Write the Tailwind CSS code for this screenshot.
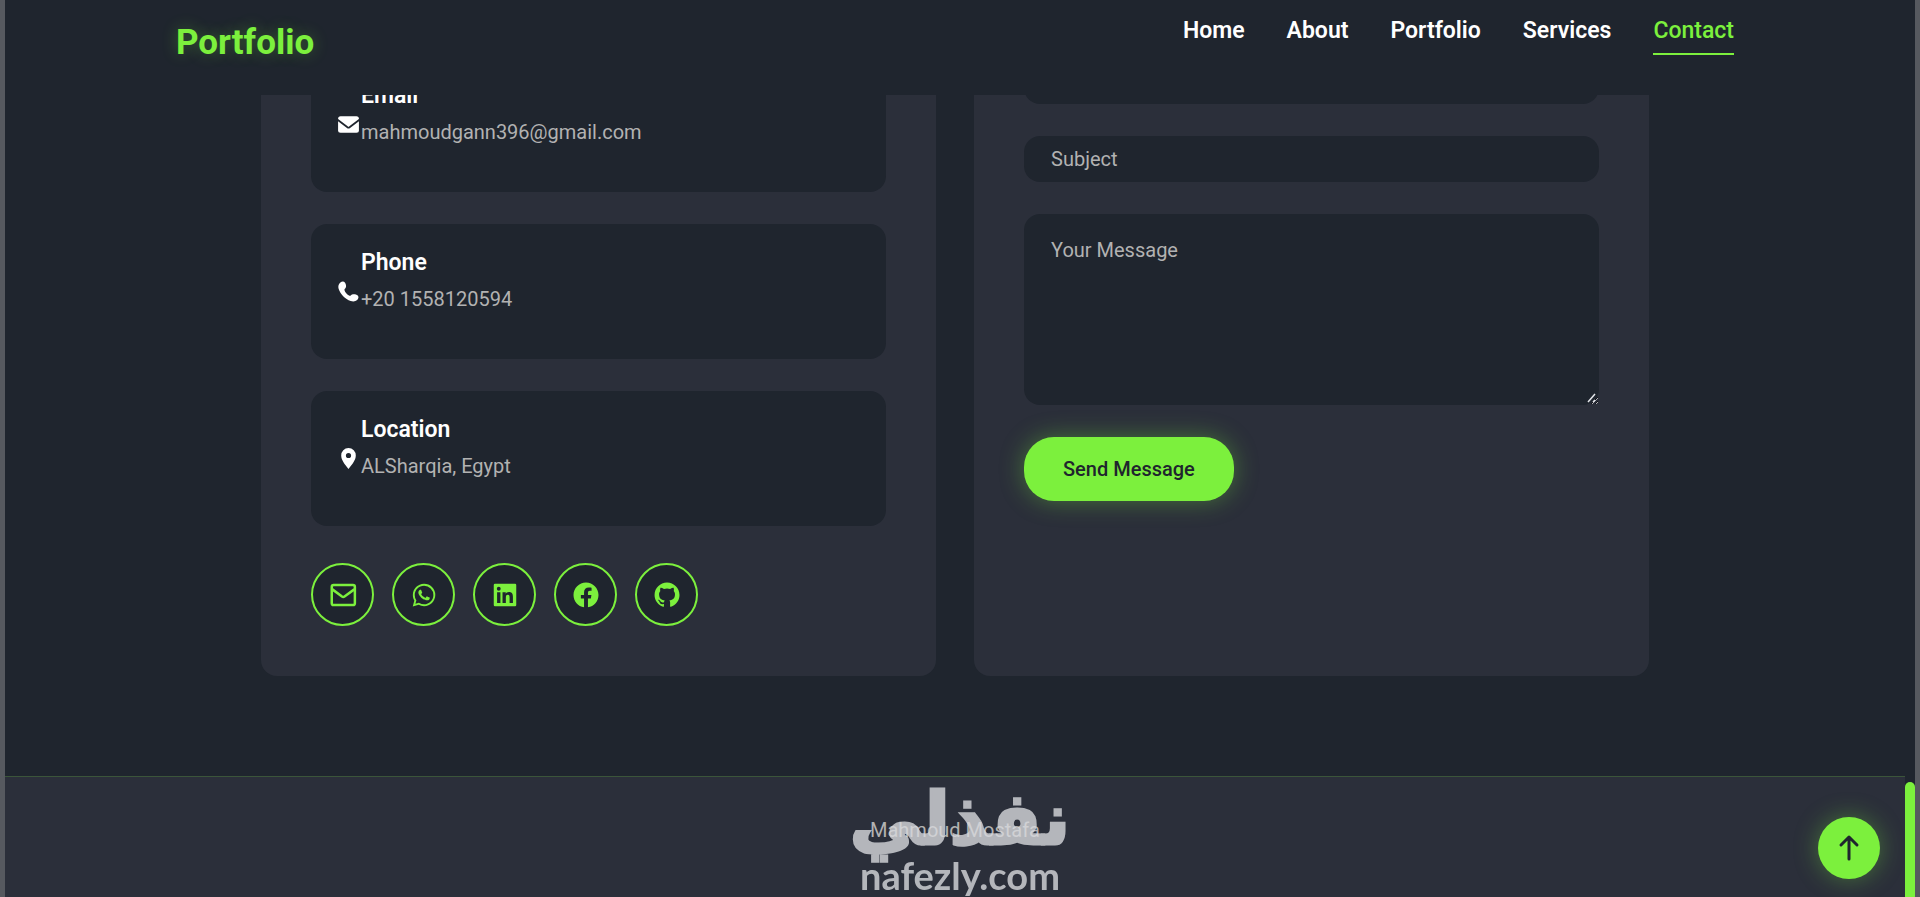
<!DOCTYPE html>
<html lang="en">
<head>
<meta charset="utf-8">
<title>Portfolio</title>
<script src="https://cdn.jsdelivr.net/npm/@tailwindcss/browser@4"></script>
</head>
<body class="h-screen overflow-hidden border-x-[5px] border-[#56595f] bg-[#1f252e] font-[Roboto,sans-serif] text-white">
<div class="flex h-full">
  <div class="relative flex min-w-0 flex-1 flex-col">
    <header class="absolute inset-x-0 top-0 z-10 flex h-[95px] items-start justify-between bg-[#1f252e] px-[9%]">
      <a href="#" class="mt-[22px] text-[35px] leading-[42px] font-bold text-[#7cf03d] [text-shadow:0_0_16px_rgba(124,240,61,0.3)]">Portfolio</a>
      <nav class="mt-4 flex gap-[42px] text-[23px] leading-[30px] font-semibold">
        <a href="#">Home</a>
        <a href="#">About</a>
        <a href="#">Portfolio</a>
        <a href="#">Services</a>
        <a href="#" class="border-b-2 border-[#7cf03d] pb-[7px] font-medium text-[#7cf03d]">Contact</a>
      </nav>
    </header>

    <main class="px-64 pt-[7px] pb-[100px]">
      <div class="grid grid-cols-2 gap-[38px]">
        <section class="rounded-2xl bg-[#2b2f3a] p-[50px]">
          <div class="flex flex-col gap-8">
            <div class="flex items-center rounded-2xl bg-[#1f252e] p-[25px]">
              <svg class="size-[25px] shrink-0" viewBox="0 0 24 24"><rect x="2" y="4" width="20" height="16" rx="2.4" fill="#fff"/><path d="M1.5 7.4 11 14.6q1 .7 2 0L22.5 7.4" fill="none" stroke="#1f252e" stroke-width="1.7"/></svg>
              <div>
                <h3 class="text-[23px] leading-[28px] font-semibold">Email</h3>
                <p class="mt-[10px] mb-[23px] text-[20px] leading-[24px] text-[#b2b2b2]">mahmoudgann396@gmail.com</p>
              </div>
            </div>
            <div class="flex items-center rounded-2xl bg-[#1f252e] p-[25px]">
              <svg class="size-[25px] shrink-0" viewBox="0 0 24 24" fill="#fff"><path d="M4.200 3.300C5.600 2.200 7.600 2 8.700 3.500C9.600 4.900 10 6.700 9.400 8.100C9 9 8 9.500 8.100 10.500C8.600 12.600 10.600 14.900 12.900 16C14.100 16.300 14.500 15.200 15.500 14.800C17.100 14.200 19.600 14.700 20.900 15.800C22.200 17.100 21.500 19.100 20.300 20.200C18.800 21.600 16.400 21.900 14.100 21.100C8.700 19.300 4.200 14.700 2.500 9.300C1.800 7 2.500 4.600 4.200 3.300Z"/></svg>
              <div>
                <h3 class="text-[23px] leading-[28px] font-semibold">Phone</h3>
                <p class="mt-[10px] mb-[23px] text-[20px] leading-[24px] text-[#b2b2b2]">+20 1558120594</p>
              </div>
            </div>
            <div class="flex items-center rounded-2xl bg-[#1f252e] p-[25px]">
              <svg class="size-[25px] shrink-0" viewBox="0 0 24 24" fill="#fff"><path fill-rule="evenodd" d="M12 2a7 7 0 0 0-7 7.200C5 13.500 8.500 18 12 22c3.500-4 7-8.500 7-12.800A7 7 0 0 0 12 2zm0 9.600a2.500 2.500 0 1 1 0-5 2.500 2.500 0 0 1 0 5z"/></svg>
              <div>
                <h3 class="text-[23px] leading-[28px] font-semibold">Location</h3>
                <p class="mt-[10px] mb-[23px] text-[20px] leading-[24px] text-[#b2b2b2]">ALSharqia, Egypt</p>
              </div>
            </div>
          </div>
          <div class="mt-[37px] flex gap-[18px] text-[#7cf03d]">
            <a href="#" aria-label="Email" class="flex size-[63px] items-center justify-center rounded-full border-2 border-[#7cf03d] bg-[#1f252e]">
              <svg class="size-[30px]" viewBox="0 0 24 24" fill="none" stroke="currentColor" stroke-width="2" stroke-linejoin="round"><rect x="3" y="4" width="18.500" height="16" rx="1.500"/><path d="M3.500 7.500 11.200 13.200q1 .7 2 0L21 7.500"/></svg>
            </a>
            <a href="#" aria-label="WhatsApp" class="flex size-[63px] items-center justify-center rounded-full border-2 border-[#7cf03d] bg-[#1f252e]">
              <svg class="size-[30px]" viewBox="0 0 24 24" fill="currentColor"><path fill-rule="evenodd" d="M18.403 5.633A8.919 8.919 0 0 0 12.053 3c-4.948 0-8.976 4.027-8.978 8.977 0 1.582.413 3.126 1.198 4.488L3 21.116l4.759-1.249a8.981 8.981 0 0 0 4.290 1.093h.004c4.947 0 8.975-4.027 8.977-8.977a8.926 8.926 0 0 0-2.627-6.350m-6.350 13.812h-.003a7.446 7.446 0 0 1-3.798-1.041l-.272-.162-2.824.741.753-2.753-.177-.282a7.448 7.448 0 0 1-1.141-3.971c.002-4.114 3.349-7.461 7.465-7.461a7.413 7.413 0 0 1 5.275 2.188 7.420 7.420 0 0 1 2.183 5.279c-.002 4.114-3.349 7.462-7.461 7.462m4.093-5.589c-.225-.113-1.327-.655-1.533-.730-.205-.075-.354-.112-.504.112s-.580.729-.711.879-.262.168-.486.056-.947-.349-1.804-1.113c-.667-.595-1.117-1.329-1.248-1.554s-.014-.346.099-.458c.101-.100.224-.262.336-.393.112-.131.149-.224.224-.374s.038-.281-.019-.393c-.056-.113-.505-1.217-.692-1.666-.181-.435-.366-.377-.504-.383a9.650 9.650 0 0 0-.429-.008.826.826 0 0 0-.599.280c-.206.225-.785.767-.785 1.871s.804 2.171.916 2.321c.112.150 1.582 2.415 3.832 3.387.536.231.954.369 1.279.473.537.171 1.026.146 1.413.089.431-.064 1.327-.542 1.514-1.066.187-.524.187-.973.131-1.067-.056-.094-.207-.151-.430-.263"/></svg>
            </a>
            <a href="#" aria-label="LinkedIn" class="flex size-[63px] items-center justify-center rounded-full border-2 border-[#7cf03d] bg-[#1f252e]">
              <svg class="size-[30px]" viewBox="0 0 24 24" fill="currentColor"><path d="M20 3H4a1 1 0 0 0-1 1v16a1 1 0 0 0 1 1h16a1 1 0 0 0 1-1V4a1 1 0 0 0-1-1zM8.339 18.337H5.667v-8.590h2.672v8.590zM7.003 8.574a1.548 1.548 0 1 1 0-3.096 1.548 1.548 0 0 1 0 3.096zm11.335 9.763h-2.669V14.160c0-.996-.018-2.277-1.388-2.277-1.390 0-1.601 1.086-1.601 2.207v4.248h-2.667v-8.590h2.560v1.174h.037c.355-.675 1.227-1.387 2.524-1.387 2.704 0 3.203 1.778 3.203 4.092v4.710z"/></svg>
            </a>
            <a href="#" aria-label="Facebook" class="flex size-[63px] items-center justify-center rounded-full border-2 border-[#7cf03d] bg-[#1f252e]">
              <svg class="size-[30px]" viewBox="0 0 24 24" fill="currentColor"><path d="M12.001 2.002c-5.522 0-9.999 4.477-9.999 9.999 0 4.990 3.656 9.126 8.437 9.879v-6.988h-2.540v-2.891h2.540V9.798c0-2.508 1.493-3.891 3.776-3.891 1.094 0 2.240.195 2.240.195v2.459h-1.264c-1.240 0-1.628.772-1.628 1.563v1.875h2.771l-.443 2.891h-2.328v6.988C18.344 21.129 22 16.992 22 12.001c0-5.522-4.477-9.999-9.999-9.999z"/></svg>
            </a>
            <a href="#" aria-label="GitHub" class="flex size-[63px] items-center justify-center rounded-full border-2 border-[#7cf03d] bg-[#1f252e]">
              <svg class="size-[30px]" viewBox="0 0 24 24" fill="currentColor"><path d="M12.026 2c-5.509 0-9.974 4.465-9.974 9.974 0 4.406 2.857 8.145 6.821 9.465.499.090.679-.217.679-.481 0-.237-.008-.865-.011-1.696-2.775.602-3.361-1.338-3.361-1.338-.452-1.152-1.107-1.459-1.107-1.459-.905-.619.069-.605.069-.605 1.002.070 1.527 1.028 1.527 1.028.890 1.524 2.336 1.084 2.902.829.091-.645.351-1.085.635-1.334-2.214-.251-4.542-1.107-4.542-4.930 0-1.087.389-1.979 1.024-2.675-.101-.253-.446-1.268.099-2.640 0 0 .837-.269 2.742 1.021a9.582 9.582 0 0 1 2.496-.336 9.554 9.554 0 0 1 2.496.336c1.906-1.291 2.742-1.021 2.742-1.021.545 1.372.203 2.387.099 2.640.640.696 1.024 1.587 1.024 2.675 0 3.833-2.330 4.675-4.552 4.922.355.308.675.916.675 1.846 0 1.334-.012 2.410-.012 2.737 0 .267.178.577.687.479C19.146 20.115 22 16.379 22 11.974 22 6.465 17.535 2 12.026 2z"/></svg>
            </a>
          </div>
        </section>

        <section class="rounded-2xl bg-[#2b2f3a] p-[50px]">
          <form class="flex flex-col items-start gap-8 text-[20px] leading-[24px]">
            <input type="email" aria-label="Your Email" class="h-[47px] w-full rounded-2xl bg-[#1f252e] px-[27px]">
            <input type="text" aria-label="Subject" placeholder="Subject" class="h-[46px] w-full rounded-2xl bg-[#1f252e] px-[27px] placeholder:text-[#b2b2b2]">
            <div class="relative w-full">
              <textarea aria-label="Your Message" placeholder="Your Message" class="block h-[191px] w-full resize-y rounded-2xl bg-[#1f252e] px-[27px] py-6 placeholder:text-[#b2b2b2]"></textarea>
              <!-- Resize grip -->
              <svg class="pointer-events-none absolute right-0 bottom-0 size-3" viewBox="0 0 12 12" fill="none" stroke="#e4e6ea" stroke-width="1.500"><path d="M1 9 8 1M6 9l2-2"/></svg>
            </div>
            <button type="button" class="h-16 rounded-[30px] bg-[#7cf03d] px-[39px] font-medium text-[#1f252e] shadow-[0_0_24px_rgba(124,240,61,0.35)]">Send Message</button>
          </form>
        </section>
      </div>
    </main>

    <footer class="flex flex-1 flex-col items-center border-t border-[#7cf03d]/20 bg-[#2b2f3a] pt-10">
      <p class="text-[20px] leading-[26px] text-[#b2b2b2]">Mahmoud Mostafa</p>
    </footer>

    <button type="button" aria-label="Back to top" class="absolute right-[25px] bottom-[18px] flex size-[62px] items-center justify-center rounded-full bg-[#7cf03d] shadow-[0_0_24px_rgba(124,240,61,0.35)]">
      <svg class="size-[30px]" viewBox="0 0 30 30" fill="none" stroke="#1f252e" stroke-width="3" stroke-linecap="round" stroke-linejoin="round"><path d="M15 26V4M7 12l8-8 8 8"/></svg>
    </button>
  </div>

  <div class="flex w-[10px] flex-col justify-end bg-[#1f252e]">
    <div class="h-[115px] rounded-t-full bg-[#7cf03d]"></div>
  </div>
</div>

<!-- Site watermark laid over the footer -->
<div class="pointer-events-none fixed inset-x-0 bottom-0 z-20 flex flex-col items-center pb-[2px] text-[#d7d9dd] opacity-80">
  <span lang="ar" dir="rtl" class="font-['DejaVu_Sans',sans-serif] text-[72px] leading-[72px] font-bold [-webkit-text-stroke:3px_#d7d9dd]">نفذلي</span>
  <span class="font-['Lato',sans-serif] text-[38px] leading-[40px] font-bold">nafezly.com</span>
</div>
</body>
</html>
